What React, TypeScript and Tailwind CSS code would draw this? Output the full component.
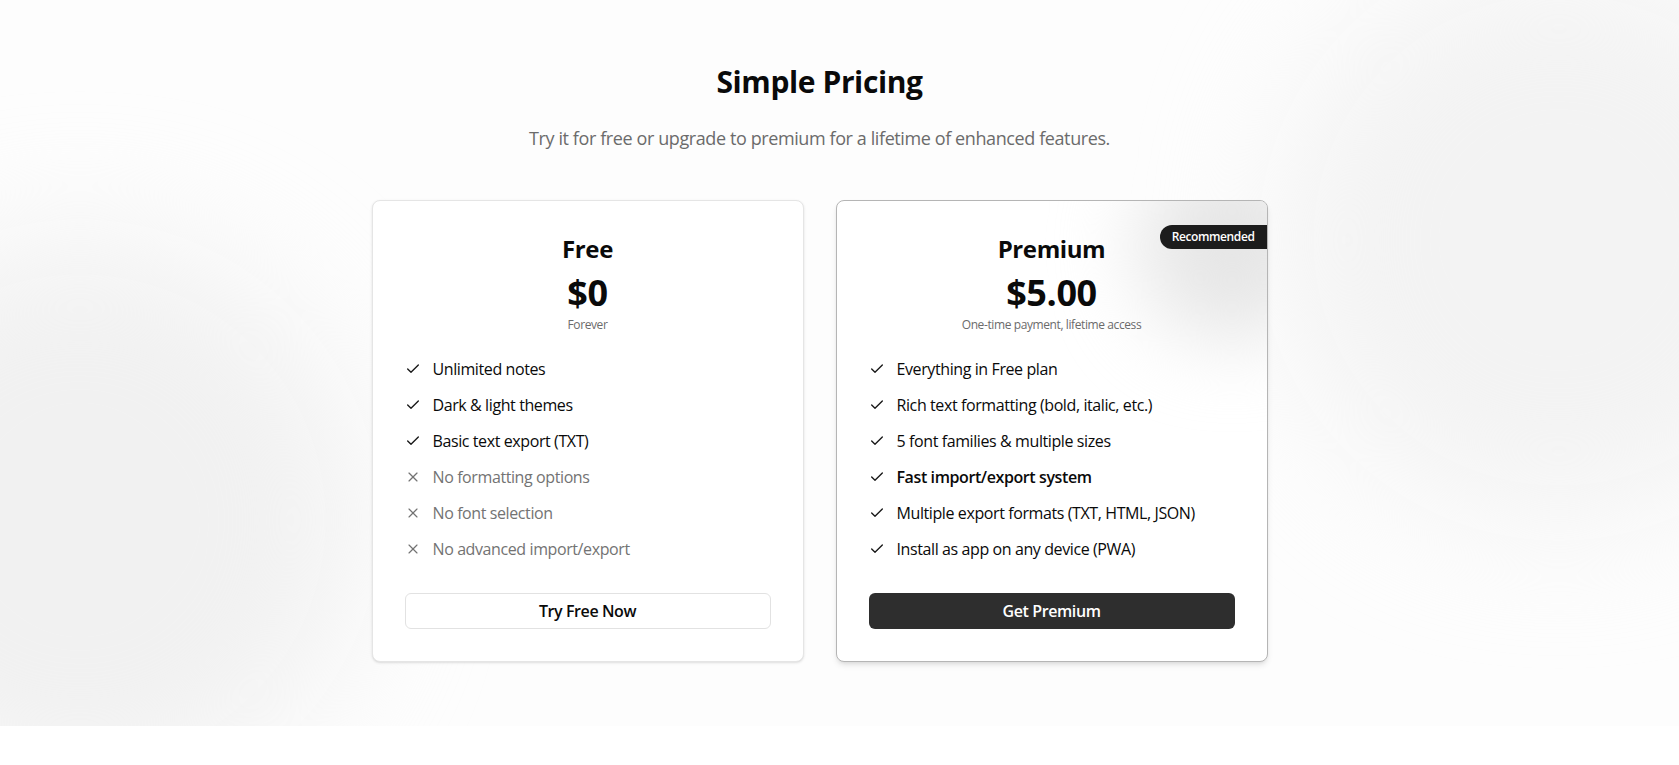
import { Check, X } from "lucide-react";

type Feature = { text: string; included: boolean; bold?: boolean };

const freeFeatures: Feature[] = [
  { text: "Unlimited notes", included: true },
  { text: "Dark & light themes", included: true },
  { text: "Basic text export (TXT)", included: true },
  { text: "No formatting options", included: false },
  { text: "No font selection", included: false },
  { text: "No advanced import/export", included: false },
];

const premiumFeatures: Feature[] = [
  { text: "Everything in Free plan", included: true },
  { text: "Rich text formatting (bold, italic, etc.)", included: true },
  { text: "5 font families & multiple sizes", included: true },
  { text: "Fast import/export system", included: true, bold: true },
  { text: "Multiple export formats (TXT, HTML, JSON)", included: true },
  { text: "Install as app on any device (PWA)", included: true },
];

function FeatureList({ items }: { items: Feature[] }) {
  return (
    <ul className="mt-6 flex flex-col gap-3">
      {items.map((f) => (
        <li key={f.text} className="flex items-center gap-3 text-base leading-6">
          {f.included ? (
            <Check size={16} strokeWidth={2} className="shrink-0 text-neutral-900" />
          ) : (
            <X size={16} strokeWidth={1.75} className="shrink-0 text-neutral-500" />
          )}
          <span
            className={
              f.included
                ? f.bold
                  ? "font-semibold text-neutral-950"
                  : "text-neutral-950"
                : "text-neutral-500"
            }
          >
            {f.text}
          </span>
        </li>
      ))}
    </ul>
  );
}

export default function App() {
  return (
    <div className="bg-white font-['Segoe_UI','Open_Sans',sans-serif] tracking-[-0.025em] text-neutral-950">
      <section className="relative overflow-hidden bg-[#fdfdfd] py-16 pr-10">
        <div className="pointer-events-none absolute -left-[200px] top-[240px] h-[560px] w-[560px] rounded-full bg-[#f1f1f1] blur-3xl" />
        <div className="pointer-events-none absolute -right-[160px] -top-[40px] h-[560px] w-[560px] rounded-full bg-[#f3f3f3] blur-3xl" />

        <div className="relative mx-auto flex max-w-4xl flex-col items-center">
          <h1 className="text-3xl font-bold leading-9">Simple Pricing</h1>
          <p className="mt-6 text-lg leading-7 text-[#6b6b6b]">
            Try it for free or upgrade to premium for a lifetime of enhanced features.
          </p>

          <div className="mt-12 grid w-full grid-cols-2 gap-8">
            <div className="rounded-lg border border-[#e5e5e5] bg-white p-8 shadow-sm">
              <div className="flex flex-col items-center">
                <h2 className="text-2xl font-bold leading-8">Free</h2>
                <div className="mt-2 text-4xl font-bold leading-10">$0</div>
                <div className="mt-1 text-xs leading-4 text-[#6b6b6b]">Forever</div>
              </div>
              <FeatureList items={freeFeatures} />
              <button className="mt-8 h-9 w-full rounded-md border border-[#e2e2e2] bg-white text-base font-semibold text-neutral-950">
                Try Free Now
              </button>
            </div>

            <div className="relative overflow-hidden rounded-lg border border-[#b5b5b5] bg-white p-8 shadow-md">
              <div className="pointer-events-none absolute -right-[60px] -top-[50px] h-[190px] w-[190px] rounded-full bg-[#e6e6e6] blur-2xl" />
              <span className="absolute right-0 top-6 rounded-l-full bg-[#1c1c1c] py-1 pl-3 pr-3 text-xs font-semibold leading-4 text-white">
                Recommended
              </span>
              <div className="relative flex flex-col items-center">
                <h2 className="text-2xl font-bold leading-8">Premium</h2>
                <div className="mt-2 text-4xl font-bold leading-10">$5.00</div>
                <div className="mt-1 text-xs leading-4 text-[#6b6b6b]">
                  One-time payment, lifetime access
                </div>
              </div>
              <div className="relative">
                <FeatureList items={premiumFeatures} />
                <button className="mt-8 h-9 w-full rounded-md bg-[#2e2e2e] text-base font-semibold text-white">
                  Get Premium
                </button>
              </div>
            </div>
          </div>
        </div>
      </section>
      <div className="h-10 bg-white" />
    </div>
  );
}
